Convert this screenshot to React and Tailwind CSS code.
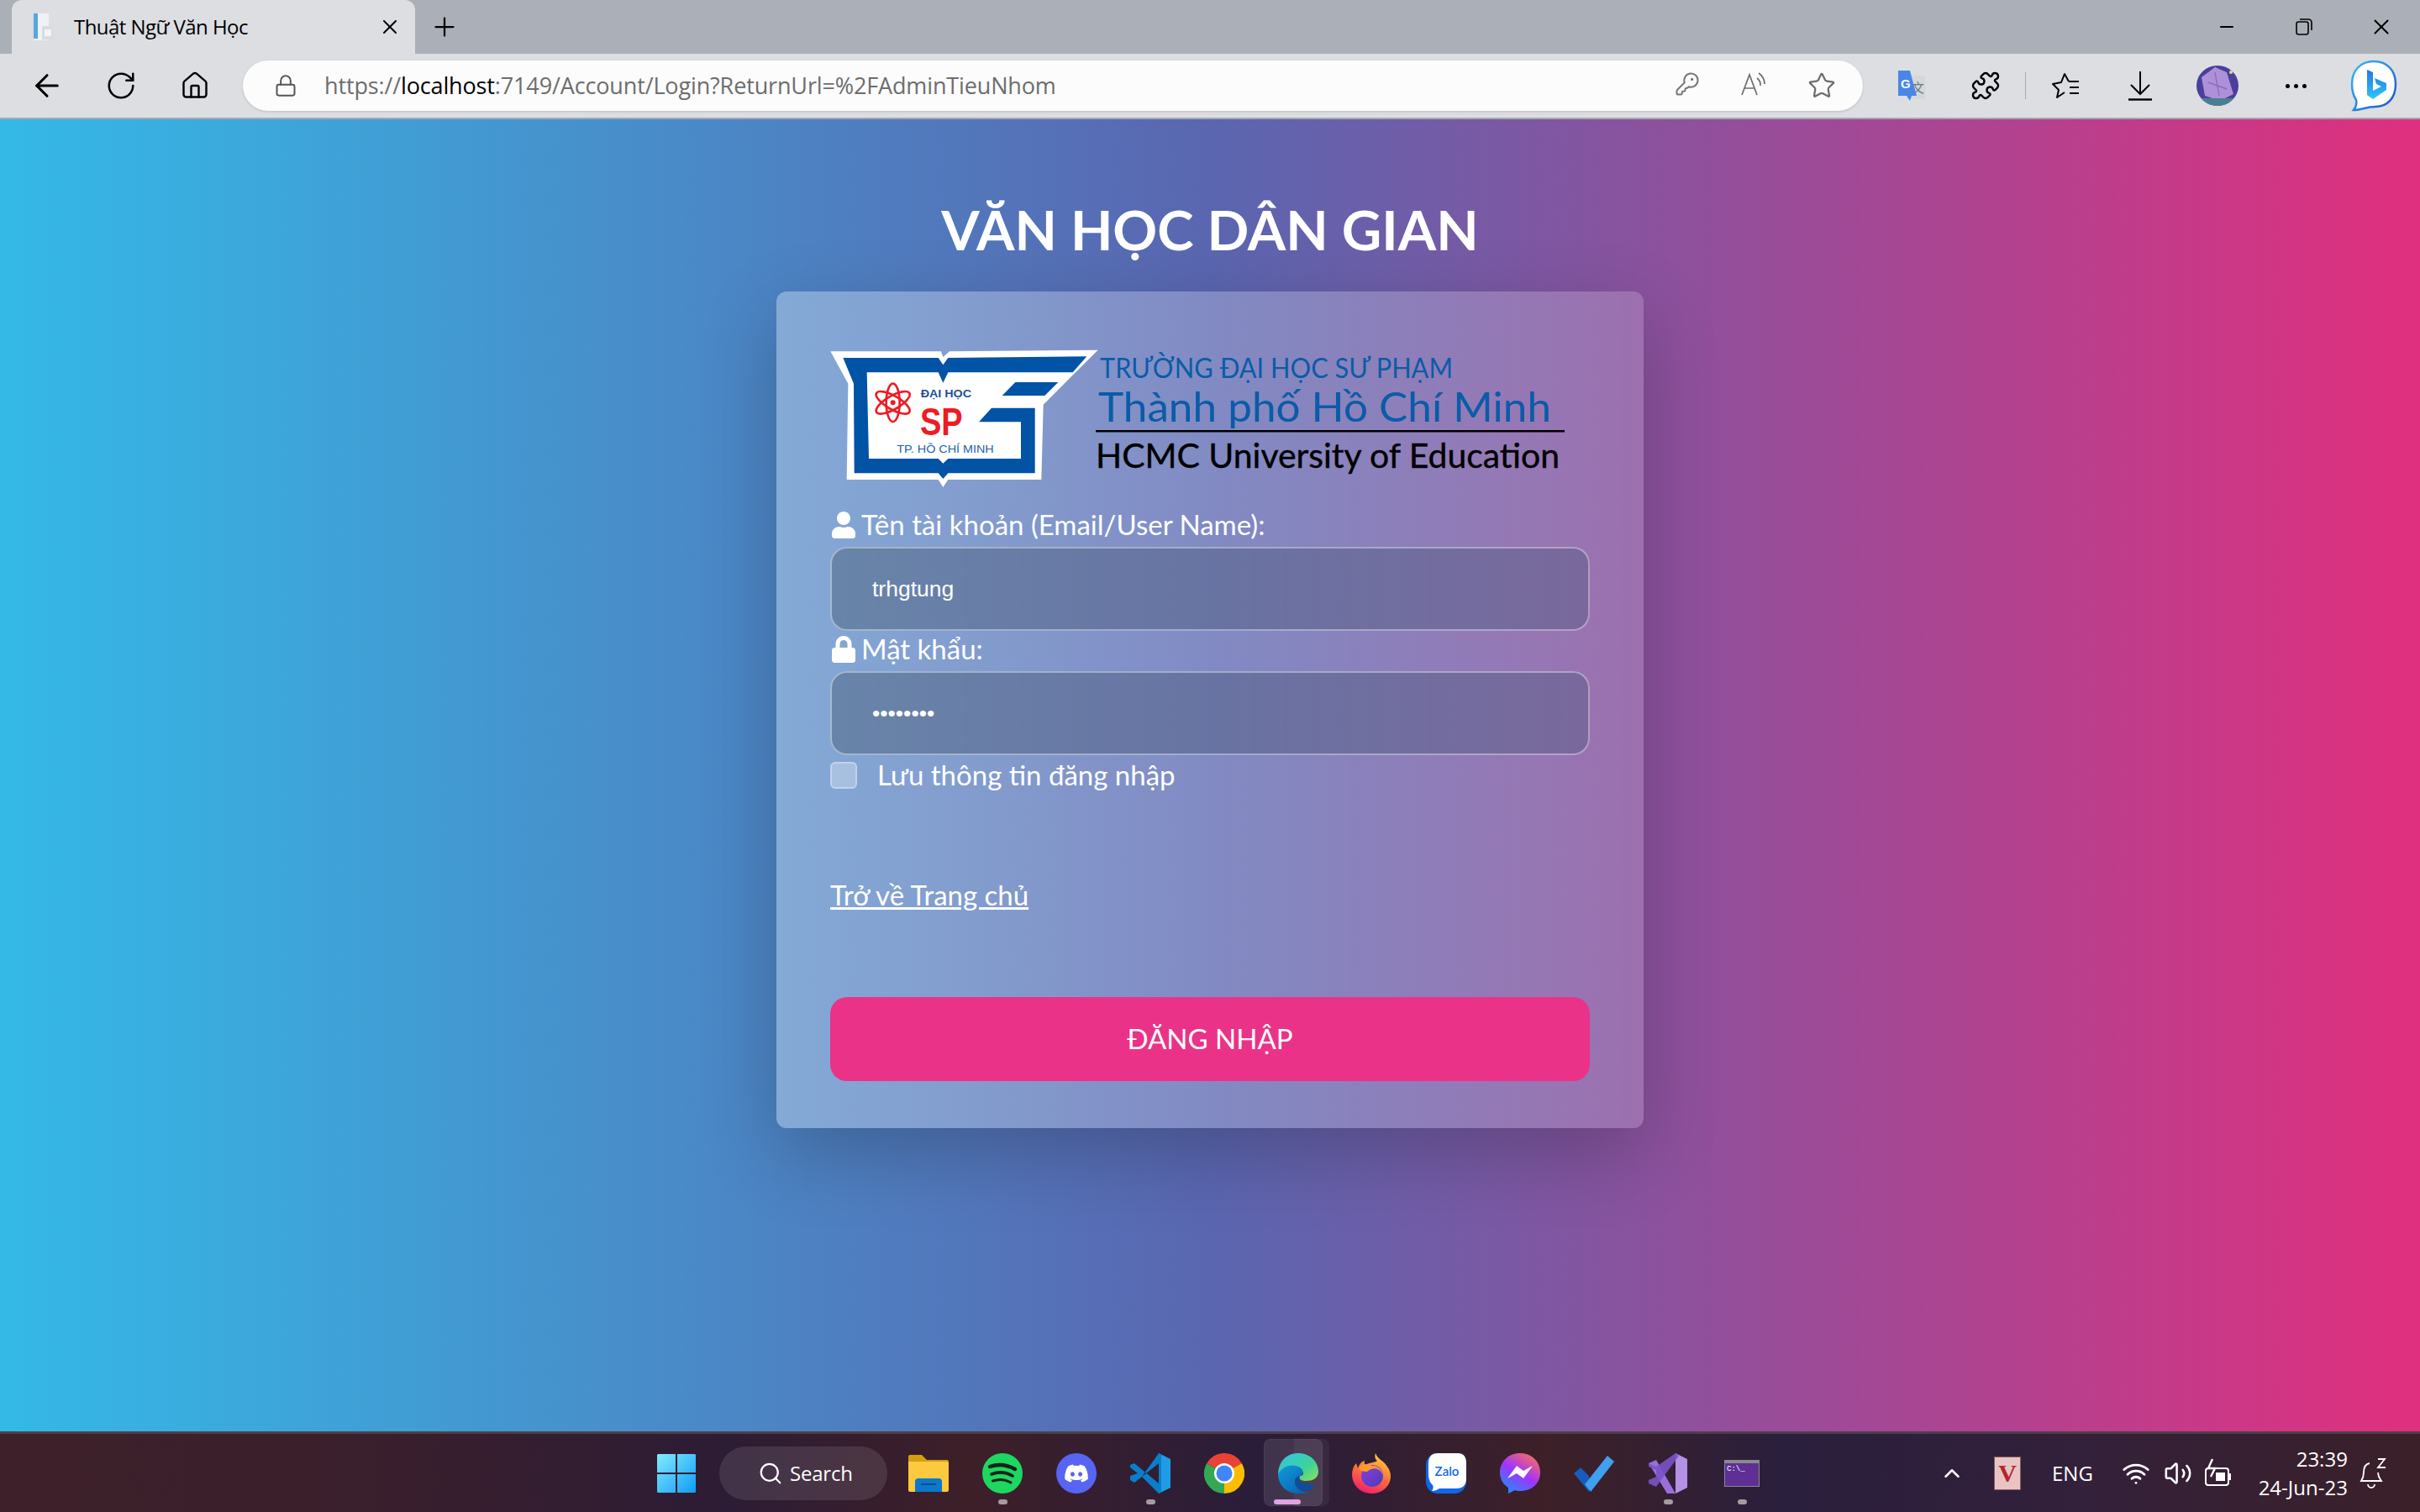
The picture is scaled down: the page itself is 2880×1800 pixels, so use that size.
import React from "react";
import { ArrowLeft, RotateCw, House, Lock, KeyRound, Star, Puzzle, Plus, X, Minus, Search, ChevronUp, Volume2, Wifi } from "lucide-react";
import { FaUser, FaLock, FaDiscord } from "react-icons/fa";

const UI = "font-['Open_Sans','Noto_Sans',sans-serif]";
const BODY = "font-['Lato','Noto_Sans',sans-serif]";

function Favicon() {
  return (
    <svg width="28" height="34" viewBox="0 0 28 34">
      <rect x="2" y="1" width="18" height="32" fill="#eef1f5" />
      <rect x="2" y="1" width="5" height="30" fill="#5ba6dc" />
      <rect x="12" y="16" width="14" height="16" fill="#d9dbde" />
      <rect x="15" y="20" width="8" height="8" fill="#f4f4f4" />
    </svg>
  );
}

function ReadAloud() {
  return (
    <svg width="34" height="30" viewBox="0 0 34 30" fill="none" stroke="#6d6d6d" strokeWidth="1.7">
      <path d="M2 28 L11 4 L20 28 M5.5 20 H16.5" />
      <path d="M20 8 A10 10 0 0 1 24 17" />
      <path d="M22 2 A16 16 0 0 1 29 15" />
    </svg>
  );
}

function Translate() {
  return (
    <svg width="36" height="36" viewBox="0 0 36 36">
      <rect x="14" y="6" width="20" height="28" fill="#d6d7d9" />
      <text x="18" y="26" fontSize="15" fill="#6b7a80" fontFamily="Noto Sans CJK SC">文</text>
      <path d="M2 0 H16 L24 30 H18 L16 36 L12 30 H2 Z" fill="#4a86e8" />
      <text x="5" y="21" fontSize="15" fontWeight="700" fill="#fff" fontFamily="Liberation Sans">G</text>
    </svg>
  );
}

function FavList() {
  return (
    <svg width="34" height="32" viewBox="0 0 34 32" fill="none" stroke="#000" strokeWidth="2" strokeLinejoin="round">
      <path d="M20 11 L15 2 L11 12 L1 14 L8 21 L6 30 L15 24" />
      <path d="M20 11 H32 M21 18 H32 M21 25 H32" />
    </svg>
  );
}

function Download() {
  return (
    <svg width="30" height="36" viewBox="0 0 30 36" fill="none" stroke="#000" strokeWidth="2">
      <path d="M15 1 V27 M4 17 L15 28 L26 17" />
      <path d="M1 34.5 H29" strokeWidth="2.4" />
    </svg>
  );
}

function Avatar() {
  return (
    <svg width="50" height="48" viewBox="0 0 50 48">
      <defs>
        <clipPath id="avc"><ellipse cx="25" cy="24" rx="25" ry="24" /></clipPath>
      </defs>
      <g clipPath="url(#avc)">
        <rect width="50" height="48" fill="#4a3f9c" />
        <path d="M6 14 L22 2 L36 8 L44 34 L28 42 L10 36 Z" fill="#ad90d8" />
        <path d="M22 8 L27 36 M14 20 L36 28" stroke="#8a6cc0" strokeWidth="1.4" />
        <rect y="39" width="50" height="9" fill="#49808f" />
        <circle cx="41" cy="8" r="2" fill="#e8d98a" />
      </g>
    </svg>
  );
}

function Bing() {
  return (
    <svg width="56" height="62" viewBox="0 0 56 62">
      <defs>
        <linearGradient id="bingb" x1="0" y1="0" x2="1" y2="1">
          <stop offset="0" stopColor="#37bdf2" />
          <stop offset="1" stopColor="#1b4fd0" />
        </linearGradient>
        <linearGradient id="bingm" x1="0" y1="0" x2="0" y2="1">
          <stop offset="0" stopColor="#1f77e6" />
          <stop offset="1" stopColor="#31c5f4" />
        </linearGradient>
      </defs>
      <path d="M28 2 C44 2 54 13 54 29 C54 46 44 56 30 56 C20 56 12 60 4 60 C7 56 8 52 7 48 C3 42 2 36 2 29 C2 13 12 2 28 2 Z" fill="#fff" stroke="url(#bingb)" strokeWidth="2.5" />
      <path d="M20 12 L27 15 V37 L37 32 L31 29 L29 22 L43 28 V36 L27 47 L20 42 Z" fill="url(#bingm)" />
    </svg>
  );
}

function Restore() {
  return (
    <svg width="22" height="22" viewBox="0 0 22 22" fill="none" stroke="#000" strokeWidth="1.6">
      <rect x="2" y="5" width="14" height="15" rx="2.5" />
      <path d="M6 2 H16 A4 4 0 0 1 20 6 V15" />
    </svg>
  );
}

function WinLogo() {
  return (
    <svg width="46" height="46" viewBox="0 0 46 46">
      <defs>
        <linearGradient id="win" x1="0" y1="0" x2="1" y2="1">
          <stop offset="0" stopColor="#82eaff" />
          <stop offset="1" stopColor="#0f9cf5" />
        </linearGradient>
      </defs>
      <path d="M1 0 H22 V22 H0 V1 Z M24 0 H45 L46 1 V22 H24 Z M0 24 H22 V46 H1 L0 45 Z M24 24 H46 V45 L45 46 H24 Z" fill="url(#win)" />
    </svg>
  );
}

function Folder() {
  return (
    <svg width="48" height="44" viewBox="0 0 48 44">
      <path d="M0 2 Q0 0 2 0 H16 L22 6 H46 Q48 6 48 8 V20 H0 Z" fill="#d49f0c" />
      <path d="M0 8 H46 Q48 8 48 10 V42 Q48 44 46 44 H2 Q0 44 0 42 Z" fill="#fcc93f" />
      <path d="M8 44 V32 Q8 28 12 28 H36 Q40 28 40 32 V44 Z" fill="#0b78c9" />
      <rect x="15" y="34" width="18" height="2" fill="#0a4f8e" />
    </svg>
  );
}

function Spotify() {
  return (
    <svg width="48" height="48" viewBox="0 0 48 48" fill="none">
      <circle cx="24" cy="24" r="24" fill="#1ed760" />
      <path d="M9 16 Q24 11 39 19" stroke="#16211a" strokeWidth="4.4" strokeLinecap="round" />
      <path d="M11 25 Q24 20 36 27" stroke="#16211a" strokeWidth="3.6" strokeLinecap="round" />
      <path d="M12.5 33 Q24 29 34 35" stroke="#16211a" strokeWidth="3" strokeLinecap="round" />
    </svg>
  );
}

function Discord() {
  return (
    <div className="w-12 h-12 rounded-full bg-[#5865f2] flex items-center justify-center text-white">
      <FaDiscord size={30} />
    </div>
  );
}

function VSCode() {
  return (
    <svg width="48" height="48" viewBox="0 0 48 48">
      <path d="M34 0 L48 7 V41 L34 48 Z" fill="#1f9ce6" />
      <path d="M34 0 L37 2 V46 L34 48 L14 28 L5 35 L0 32 V27 L9 24 L0 17 V14 L5 12 L34 36 V12 L14 28 Z" fill="#0a7ecb" fillRule="evenodd" />
    </svg>
  );
}

function Chrome() {
  return (
    <svg width="48" height="48" viewBox="0 0 48 48">
      <path d="M24 24 L3.2 12 A24 24 0 0 1 44.8 12 Z" fill="#ea4335" />
      <path d="M24 24 L44.8 12 A24 24 0 0 1 24 48 Z" fill="#fbbc04" />
      <path d="M24 24 L24 48 A24 24 0 0 1 3.2 12 Z" fill="#34a853" />
      <circle cx="24" cy="24" r="12" fill="#fff" />
      <circle cx="24" cy="24" r="9.5" fill="#4285f4" />
    </svg>
  );
}

function Edge() {
  return (
    <svg width="48" height="48" viewBox="0 0 48 48">
      <defs>
        <linearGradient id="edg" x1="0" y1="0" x2="1" y2="1">
          <stop offset="0" stopColor="#33c3e8" />
          <stop offset="0.6" stopColor="#3dd29a" />
          <stop offset="1" stopColor="#8fe25a" />
        </linearGradient>
        <linearGradient id="edb" x1="0" y1="0" x2="1" y2="1">
          <stop offset="0" stopColor="#0f9bdd" />
          <stop offset="1" stopColor="#0c5ba8" />
        </linearGradient>
      </defs>
      <path d="M24 0 C38 0 48 10 48 22 C48 30 41 33 33 33 C28 33 24 31 26 27 C30 27 31 24 29 21 C26 15 17 14 10 18 C5 21 2 25 0 26 C0 10 10 0 24 0 Z" fill="url(#edg)" />
      <path d="M0 25 C6 14 18 12 26 17 C31 20 30 26 26 27 C20 28 18 34 22 40 C25 45 31 47 38 46 C33 48 28 48 24 48 C10 48 0 38 0 25 Z" fill="url(#edb)" />
      <path d="M26 27 C20 28 18 34 22 40 C26 46 36 47 44 40 C40 37 34 36 30 36 C26 35 24 31 26 27 Z" fill="#0b4f9c" />
    </svg>
  );
}

function Firefox() {
  return (
    <svg width="48" height="48" viewBox="0 0 48 48">
      <defs>
        <linearGradient id="ffx" x1="0.7" y1="0" x2="0.3" y2="1">
          <stop offset="0" stopColor="#ffd33d" />
          <stop offset="0.5" stopColor="#ff7139" />
          <stop offset="1" stopColor="#f01c6f" />
        </linearGradient>
        <linearGradient id="ffp" x1="0" y1="0" x2="1" y2="1">
          <stop offset="0" stopColor="#8a3ee0" />
          <stop offset="1" stopColor="#4b3bb8" />
        </linearGradient>
      </defs>
      <path d="M28 0 C30 7 37 8 42 16 C47 23 47 30 44 36 C40 44 32 48 24 48 C11 48 0 39 0 25 C0 20 2 15 5 12 L7 18 C9 12 13 9 15 9 C14 11 15 13 16 14 C20 11 28 11 30 9 C27 7 27 3 28 0 Z" fill="url(#ffx)" />
      <circle cx="24" cy="27" r="13" fill="url(#ffp)" />
      <path d="M8 18 C14 10 20 14 24 15 C30 14 36 20 37 26 C33 17 24 16 18 22 C14 22 10 21 8 18 Z" fill="#ff9a2e" />
    </svg>
  );
}

function Zalo() {
  return (
    <svg width="48" height="48" viewBox="0 0 48 48">
      <rect width="48" height="48" rx="14" fill="#0f68ea" />
      <path d="M14 0 H38 Q48 0 48 12 V30 Q48 42 36 42 H16 C13 44 10 45 7 45 C9 42 9 40 8 38 C4 34 3 30 3 24 V12 Q3 0 14 0 Z" fill="#fff" />
      <text x="25" y="27" textAnchor="middle" fontSize="15" fontWeight="600" fill="#0f68ea" fontFamily="Lato, sans-serif">Zalo</text>
    </svg>
  );
}

function Messenger() {
  return (
    <svg width="48" height="48" viewBox="0 0 48 48">
      <defs>
        <linearGradient id="msg" x1="0.2" y1="1" x2="0.8" y2="0">
          <stop offset="0" stopColor="#1f8fff" />
          <stop offset="0.5" stopColor="#a033ff" />
          <stop offset="1" stopColor="#ff6c5c" />
        </linearGradient>
      </defs>
      <path d="M24 0 C38 0 48 10 48 23 C48 36 38 45 24 45 C22 45 20 45 18 44 L10 48 V41 C4 37 0 31 0 23 C0 10 10 0 24 0 Z" fill="url(#msg)" />
      <path d="M9 30 L20 15 L28 21 L39 15 L28 30 L20 24 Z" fill="#fff" />
    </svg>
  );
}

function Todo() {
  return (
    <svg width="48" height="48" viewBox="0 0 48 48">
      <path d="M0 24 L8 17 L18 27 L18 46 Z" fill="#185abd" />
      <path d="M40 3 L48 10 L20 46 L13 37 Z" fill="#3fa0ed" />
    </svg>
  );
}

function VStudio() {
  return (
    <svg width="46" height="48" viewBox="0 0 46 48">
      <path d="M32 0 L46 7 V41 L32 48 Z" fill="#b491e6" />
      <path d="M0 12 L9 8 L32 48 L22 48 Z" fill="#9a6fdc" />
      <path d="M32 0 L36 3 L9 40 L0 36 V32 L9 28 V20 L0 16 V12 L9 16 Z" fill="#7b52c4" fillOpacity="0.9" />
    </svg>
  );
}

function Cmd() {
  return (
    <div className="w-[42px] h-[32px] bg-[#5f2f95] border border-[#8a8a8a] border-t-4 flex items-start">
      <span className="text-[9px] leading-[14px] text-white font-['Liberation_Mono',monospace] pl-0.5">C:\_</span>
    </div>
  );
}

function TaskIcon({ children, dot, active }) {
  return (
    <div className="relative w-[88px] h-full flex items-center justify-center">
      {active && (
        <>
          <div className="absolute left-[39px] top-[6px] w-[42px] h-[80px] bg-white/5 rounded-r-lg" />
          <div className="absolute left-[3px] top-[6px] w-[70px] h-[80px] bg-white/10 border border-white/5 rounded-lg" />
        </>
      )}
      <div className="relative">{children}</div>
      {dot && <div className="absolute left-[39px] bottom-[9px] w-[11px] h-[6px] rounded-full bg-[#a59ca2]" />}
      {active && <div className="absolute left-[15px] bottom-[9px] w-[32px] h-[6px] rounded-full bg-[#dfa2e4]" />}
    </div>
  );
}

function BellZ() {
  return (
    <svg width="34" height="40" viewBox="0 0 34 40" fill="none" stroke="#fff" strokeWidth="1.8">
      <path d="M12 8 C6 9 5 14 5 19 C5 24 4 26 2 29 H26 C24 26 22 24 22 19" />
      <path d="M10 33 A4 4 0 0 0 18 33" />
      <path d="M22 3 H30 L22 13 H31" />
    </svg>
  );
}

function Battery() {
  return (
    <svg width="34" height="36" viewBox="0 0 34 36" fill="none" stroke="#fff" strokeWidth="2">
      <rect x="2" y="12" width="27" height="20" rx="3" />
      <path d="M31 18 V26" />
      <path d="M10 1 L5 12 H13 L8 22" strokeWidth="2.4" />
      <rect x="14" y="17" width="11" height="10" fill="#fff" stroke="none" />
    </svg>
  );
}

function Logo() {
  return (
    <svg width="904" height="170" viewBox="0 0 904 170">
      <g transform="translate(-28,-12) scale(0.33333)">
        <polygon fill="#fff" points="85,55 480,55 487,75 510,55 1040,50 845,245 838,513 505,513 487,540 470,513 143,513 148,170" />
        <polygon fill="#0053a5" points="130,78 470,78 487,103 505,78 1000,73 950,130 505,130 487,167 470,130 215,130 222,438 470,438 487,455 505,438 765,438 765,307 615,307 660,257 815,257 815,490 505,490 487,510 470,490 170,490 168,170" />
        <polygon fill="#0053a5" points="745,165 898,165 850,213 698,213" />
        <g fill="none" stroke="#ed1c24" strokeWidth="8">
          <ellipse cx="308" cy="238" rx="24" ry="68" />
          <ellipse cx="308" cy="238" rx="24" ry="68" transform="rotate(60 308 238)" />
          <ellipse cx="308" cy="238" rx="24" ry="68" transform="rotate(-60 308 238)" />
        </g>
        <circle cx="308" cy="238" r="9" fill="#ed1c24" />
        <text x="407" y="218" fontSize="40" fontWeight="700" fill="#1c4f9c" fontFamily="Liberation Sans, sans-serif" textLength="181" lengthAdjust="spacingAndGlyphs">ĐẠI HỌC</text>
        <text x="405" y="353" fontSize="136" fontWeight="700" fill="#ed1c24" fontFamily="Liberation Sans, sans-serif" textLength="152" lengthAdjust="spacingAndGlyphs">SP</text>
        <text x="322" y="417" fontSize="40" fill="#1c5fa8" fontFamily="Liberation Sans, sans-serif" textLength="346" lengthAdjust="spacingAndGlyphs">TP. HỒ CHÍ MINH</text>
      </g>
      <g fontFamily="Lato, sans-serif">
        <text x="321" y="38" fontSize="32" fill="#0b5ba8" textLength="420" lengthAdjust="spacingAndGlyphs">TRƯỜNG ĐẠI HỌC SƯ PHẠM</text>
        <text x="319" y="90" fontSize="49" fill="#0b5ba8" textLength="539" lengthAdjust="spacingAndGlyphs">Thành phố Hồ Chí Minh</text>
        <rect x="316" y="100" width="558" height="2.5" fill="#000" />
        <text x="316" y="145" fontSize="40" fill="#000" stroke="#000" strokeWidth="0.4" textLength="552" lengthAdjust="spacingAndGlyphs">HCMC University of Education</text>
      </g>
    </svg>
  );
}

export default function App() {
  return (
    <div className={`w-[2880px] h-[1800px] flex flex-col overflow-hidden ${UI}`}>
      {/* tab strip */}
      <div className="h-16 shrink-0 flex items-end bg-[#abafb7] pl-[14px]">
        <div className="w-[480px] h-16 bg-[#dcdee2] rounded-t-xl flex items-center pl-6 pr-4">
          <Favicon />
          <span className="ml-[22px] text-[24px] text-black tracking-[-0.55px]">Thuật Ngữ Văn Học</span>
          <X className="ml-auto" size={28} strokeWidth={1.7} color="#000" />
        </div>
        <div className="w-[70px] h-16 flex items-center justify-center">
          <Plus size={36} strokeWidth={1.5} color="#000" />
        </div>
        <div className="ml-auto flex h-16">
          <div className="w-[92px] flex items-center justify-center"><Minus size={24} strokeWidth={2} color="#000" /></div>
          <div className="w-[92px] flex items-center justify-center"><Restore /></div>
          <div className="w-[92px] flex items-center justify-center"><X size={30} strokeWidth={1.6} color="#000" /></div>
        </div>
      </div>

      {/* toolbar */}
      <div className="h-[78px] shrink-0 flex items-center bg-[#dcdee2] border-b-2 border-[#a6a9af] pl-3">
        <div className="w-[88px] flex justify-center"><ArrowLeft size={42} strokeWidth={1.8} color="#000" /></div>
        <div className="w-[88px] flex justify-center"><RotateCw size={38} strokeWidth={1.6} color="#000" /></div>
        <div className="w-[88px] flex justify-center"><House size={36} strokeWidth={1.6} color="#000" /></div>
        <div className="ml-[13px] w-[1928px] h-[60px] rounded-full bg-[#fcfcfc] shadow-[0_1px_3px_rgba(0,0,0,0.15)] flex items-center pl-[37px] pr-[9px]">
          <Lock size={28} strokeWidth={1.7} color="#555" />
          <span className="ml-[32px] text-[27px] text-[#6d6d6d] tracking-[-0.14px]">https://<span className="text-black">localhost</span>:7149/Account/Login?ReturnUrl=%2FAdminTieuNhom</span>
          <div className="ml-auto flex">
            <div className="w-20 flex justify-center"><KeyRound size={30} strokeWidth={1.6} color="#777" /></div>
            <div className="w-20 flex justify-center"><ReadAloud /></div>
            <div className="w-20 flex justify-center"><Star size={34} strokeWidth={1.6} color="#6d6d6d" /></div>
          </div>
        </div>
        <div className="ml-[14px] w-[88px] flex justify-center"><Translate /></div>
        <div className="w-[88px] flex justify-center"><Puzzle size={36} strokeWidth={1.6} color="#000" /></div>
        <div className="w-px h-8 bg-[#a6a9af] mx-[3px]" />
        <div className="ml-px w-[88px] flex justify-center"><FavList /></div>
        <div className="w-[88px] flex justify-center"><Download /></div>
        <div className="ml-1 w-[88px] flex justify-center"><Avatar /></div>
        <div className="ml-[5px] w-[88px] flex justify-center gap-[5px]">
          <div className="w-[5px] h-[5px] rounded-full bg-black" />
          <div className="w-[5px] h-[5px] rounded-full bg-black" />
          <div className="w-[5px] h-[5px] rounded-full bg-black" />
        </div>
        <div className="ml-[5px] w-[88px] flex justify-center"><Bing /></div>
      </div>

      {/* page */}
      <main className={`flex-1 flex flex-col items-center bg-[linear-gradient(90deg,#34b9e7_0%,#5a66b0_50%,#e02f7e_100%)] ${BODY}`}>
        <h1 className="mt-[90px] h-[82px] leading-[82px] text-[65.5px] font-bold text-white">VĂN HỌC DÂN GIAN</h1>
        <div className="mt-[33px] w-[1032px] h-[996px] bg-[linear-gradient(90deg,rgba(255,255,255,0.31),rgba(255,255,255,0.17))] rounded-xl shadow-[0_30px_90px_rgba(0,0,0,0.22)] px-16 pt-[65px] text-white text-[33px]">
          <div className="h-[170px]"><Logo /></div>
          <label className="mt-[21px] mb-1 h-[44px] flex items-center">
            <FaUser size={32} />
            <span className="ml-[5px]">Tên tài khoản (Email/User Name):</span>
          </label>
          <input readOnly defaultValue="trhgtung" className="block w-full h-[100px] rounded-[20px] border-2 border-white/40 bg-[linear-gradient(90deg,rgba(0,0,0,0.2),rgba(50,80,110,0.3))] px-12 text-[26.5px] text-white outline-none font-['Liberation_Sans',sans-serif]" />
          <label className="mb-1 h-[44px] flex items-center">
            <FaLock size={32} />
            <span className="ml-[5px]">Mật khẩu:</span>
          </label>
          <input readOnly type="password" defaultValue="abcdefgh" className="block w-full h-[100px] rounded-[20px] border-2 border-white/40 bg-[linear-gradient(90deg,rgba(0,0,0,0.2),rgba(50,80,110,0.3))] px-12 text-[26.5px] text-white outline-none font-['Liberation_Sans',sans-serif]" />
          <label className="mt-2 h-8 flex items-center">
            <input type="checkbox" className="appearance-none w-8 h-8 rounded-md border-2 border-white/30 bg-white/30" />
            <span className="ml-6">Lưu thông tin đăng nhập</span>
          </label>
          <a className="block mt-[104px] h-11 leading-[44px] underline">Trở về Trang chủ</a>
          <button className="block mt-[100px] w-full h-[100px] rounded-[20px] bg-[#ea3388] text-white">ĐĂNG NHẬP</button>
        </div>
      </main>

      {/* taskbar */}
      <footer className={`h-24 shrink-0 flex items-center border-t-[3px] border-[#4d4048] bg-[linear-gradient(90deg,#3d2029_0%,#3a1f2c_15%,#2d1c35_30%,#3d1f28_40%,#2a1d3a_52%,#3d2028_64%,#2a1f3d_74%,#33203a_86%,#3b2029_100%)] text-white ${UI}`}>
        <div className="ml-[761px] flex items-center h-full">
          <TaskIcon><WinLogo /></TaskIcon>
          <div className="ml-[7px] w-[200px] h-16 rounded-full bg-white/10 flex items-center pl-[46px] mr-[5px]">
            <Search size={30} strokeWidth={1.8} color="#fff" />
            <span className="ml-2 text-[24px] tracking-[-0.2px]">Search</span>
          </div>
          <TaskIcon><Folder /></TaskIcon>
          <TaskIcon dot><Spotify /></TaskIcon>
          <TaskIcon><Discord /></TaskIcon>
          <TaskIcon dot><VSCode /></TaskIcon>
          <TaskIcon><Chrome /></TaskIcon>
          <TaskIcon active><Edge /></TaskIcon>
          <TaskIcon><Firefox /></TaskIcon>
          <TaskIcon><Zalo /></TaskIcon>
          <TaskIcon><Messenger /></TaskIcon>
          <TaskIcon><Todo /></TaskIcon>
          <TaskIcon dot><VStudio /></TaskIcon>
          <TaskIcon dot><Cmd /></TaskIcon>
        </div>
        <div className="flex items-center h-full ml-[191px]">
          <ChevronUp size={30} strokeWidth={2} color="#fff" />
          <div className="ml-[35px] w-8 h-10 bg-[#e9c4c4] border border-[#8a5a5a] flex items-center justify-center text-[#b3262c] text-[30px] font-bold leading-none font-['Liberation_Serif',serif]">V</div>
          <span className="ml-[37px] text-[24px]">ENG</span>
          <Wifi className="ml-[34px]" size={34} strokeWidth={2} color="#fff" />
          <Volume2 className="ml-4" size={34} strokeWidth={1.8} color="#fff" />
          <div className="ml-[14px]"><Battery /></div>
          <div className="ml-[17px] w-[120px] flex flex-col items-end text-[24px] leading-[34px]">
            <span>23:39</span>
            <span>24-Jun-23</span>
          </div>
          <div className="ml-[14px]"><BellZ /></div>
        </div>
      </footer>
    </div>
  );
}
